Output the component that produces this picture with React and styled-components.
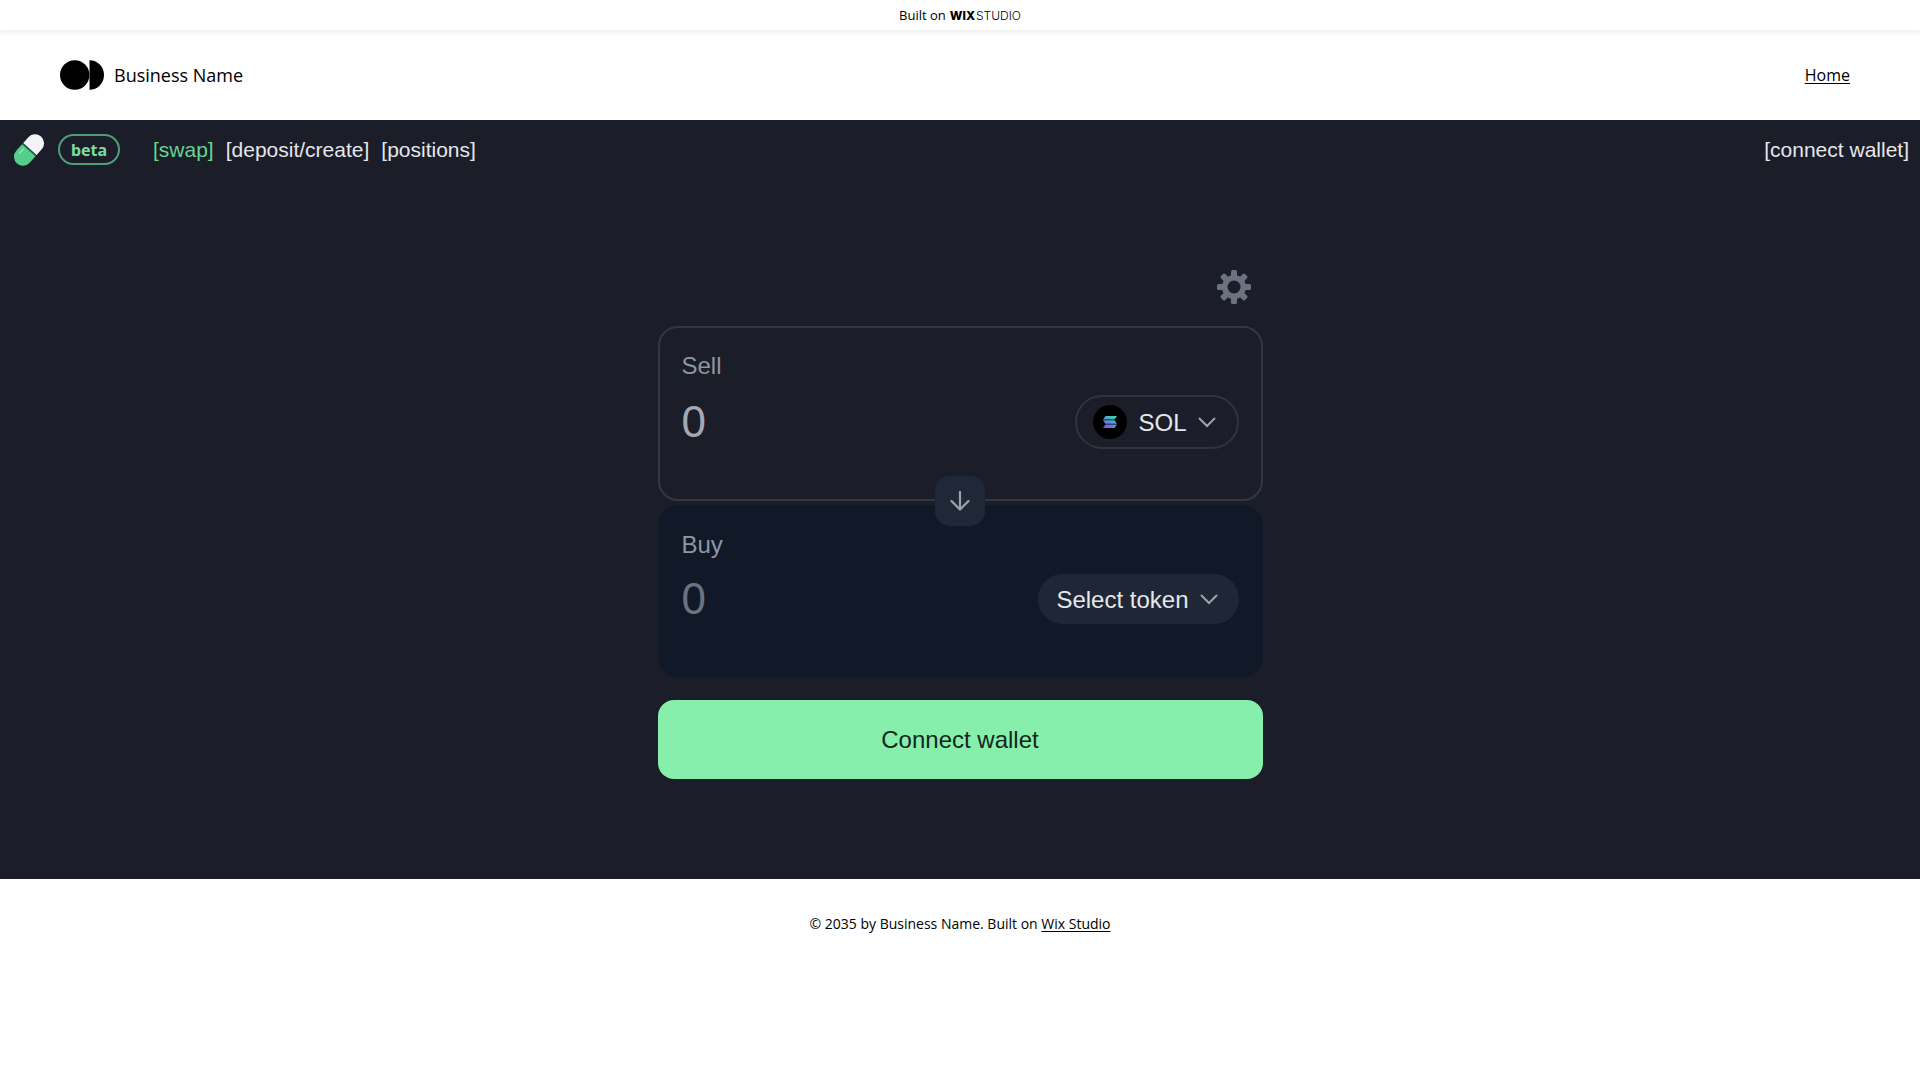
import React, { useState } from "react"
import styled, { createGlobalStyle } from "styled-components"

const GlobalStyle = createGlobalStyle`
  * {
    box-sizing: border-box;
  }

  body {
    margin: 0;
    background: #fff;
    color: #000;
    font-family: "Open Sans", "Noto Sans", sans-serif;
  }

  button,
  input,
  select {
    font-family: inherit;
  }
`

const Banner = styled.a`
  position: relative;
  display: flex;
  justify-content: center;
  align-items: center;
  gap: 4px;
  height: 30px;
  background: #fff;
  box-shadow: 0 0 8px rgba(0, 0, 0, 0.12);
  color: #000;
  font-size: 13px;
  text-decoration: none;
`

const WixMark = styled.span`
  display: flex;
  gap: 1px;
  font-family: Inter, sans-serif;
  font-size: 12px;
  font-weight: 300;
`

const WixBold = styled.span`
  font-weight: 800;
`

const Header = styled.header`
  display: flex;
  justify-content: space-between;
  align-items: center;
  height: 90px;
  padding: 0 70px 0 60px;
`

const Brand = styled.div`
  display: flex;
  align-items: center;
  gap: 10px;
  font-size: 18px;
`

const HomeLink = styled.a`
  color: #000;
  font-size: 16px;
  text-underline-offset: 2px;
`

const Dapp = styled.main`
  min-height: 759px;
  padding-bottom: 100px;
  background: #1b1d28;
  font-family: "Liberation Sans", Arial, sans-serif;
`

const TopBar = styled.div`
  display: flex;
  align-items: center;
  height: 59px;
  padding: 0 11px;
`

const Beta = styled.span`
  display: flex;
  justify-content: center;
  align-items: center;
  width: 62px;
  height: 31px;
  margin-left: 11px;
  border: 2px solid #4f9f75;
  border-radius: 16px;
  color: #79dda0;
  font-family: "Noto Sans", sans-serif;
  font-size: 16px;
  font-weight: 700;
`

const Nav = styled.nav`
  display: flex;
  gap: 12px;
  margin: 0 auto 0 33px;
`

const NavLink = styled.a`
  color: ${({ $active }) => ($active ? "#68d391" : "#e5e7eb")};
  font-size: 21px;
  text-decoration: none;
`

const WalletLink = styled.button`
  padding: 0;
  border: 0;
  background: none;
  color: #e5e7eb;
  font-size: 21px;
  cursor: pointer;
`

const SwapForm = styled.form`
  display: flex;
  flex-direction: column;
  width: 100%;
  max-width: 605px;
  margin: 0 auto;
  padding-top: 91px;
`

const SettingsButton = styled.button`
  display: flex;
  align-self: flex-end;
  margin: 0 12px 22px 0;
  padding: 0;
  border: 0;
  background: none;
  color: #6b7280;
  cursor: pointer;
`

const Card = styled.section`
  height: ${({ $filled }) => ($filled ? 172 : 175)}px;
  padding: 24px 22px;
  border: 2px solid ${({ $filled }) => ($filled ? "#111827" : "#343640")};
  border-radius: 20px;
  background: ${({ $filled }) => ($filled ? "#111827" : "transparent")};
`

const CardLabel = styled.label`
  display: block;
  color: #9095a1;
  font-size: 24px;
  line-height: 28px;
`

const Row = styled.div`
  display: flex;
  justify-content: space-between;
  align-items: center;
  margin-top: 15px;
`

const Amount = styled.input`
  flex: 1;
  min-width: 0;
  height: 50px;
  padding: 0;
  border: 0;
  outline: 0;
  background: none;
  color: #a3a8b4;
  font-size: 44px;

  &::placeholder {
    color: #6b7280;
  }
`

const TokenPill = styled.div`
  display: flex;
  align-items: center;
  gap: 11px;
  height: ${({ $filled }) => ($filled ? 50 : 54)}px;
  padding: 0 ${({ $filled }) => ($filled ? 19 : 21)}px 0 16px;
  border: 2px solid ${({ $filled }) => ($filled ? "#1f2737" : "#31333d")};
  border-radius: 27px;
  background: ${({ $filled }) => ($filled ? "#1f2737" : "transparent")};
`

const TokenSelect = styled.select`
  appearance: none;
  field-sizing: content;
  padding: 0;
  border: 0;
  outline: 0;
  background: none;
  color: #e5e7eb;
  font-size: 24px;
  cursor: pointer;

  option {
    background: #1f2937;
  }
`

const Divider = styled.div`
  position: relative;
  height: 4px;
`

const FlipButton = styled.button`
  position: absolute;
  top: 0;
  left: 50%;
  display: flex;
  justify-content: center;
  align-items: center;
  width: 50px;
  height: 50px;
  padding: 0;
  border: 0;
  border-radius: 15px;
  background: #202736;
  transform: translate(-50%, -50%);
  cursor: pointer;
`

const SubmitButton = styled.button`
  height: 79px;
  margin-top: 23px;
  border: 0;
  border-radius: 16px;
  background: #86efac;
  color: #14261d;
  font-size: 24px;
  cursor: pointer;
`

const Footer = styled.footer`
  padding: 34px 20px;
  font-size: 14px;
  line-height: 22px;
  text-align: center;

  a {
    color: #000;
    text-underline-offset: 2px;
  }
`

const LogoIcon = () => (
  <svg width="44" height="30" viewBox="0 0 44 30" aria-hidden="true">
    <circle cx="14.7" cy="15" r="14.7" />
    <path d="M29.5 0.3a14.5 14.7 0 0 1 0 29.4z" />
  </svg>
)

const PillIcon = () => (
  <svg width="36" height="36" viewBox="0 0 34 34" aria-hidden="true">
    <g transform="rotate(42 17 17)">
      <path d="M8.500 16V8.500a8.500 8.500 0 0 1 17 0V16z" fill="#f3f4f6" />
      <path d="M8.500 17v8.500a8.500 8.500 0 0 0 17 0V17z" fill="#56cd8c" />
      <path d="M8.500 16.500h17" stroke="#23563f" strokeWidth="1.4" />
      <path d="M12.500 20v5" stroke="#8be5b3" strokeWidth="1.6" strokeLinecap="round" />
    </g>
  </svg>
)

const GearIcon = () => (
  <svg width="34" height="34" viewBox="0 0 34 34" fill="currentColor" aria-hidden="true">
    {[0, 45, 90, 135].map(angle => (
      <rect
        key={angle}
        x="14"
        y="0"
        width="6"
        height="34"
        rx="1.5"
        transform={`rotate(${angle} 17 17)`}
      />
    ))}
    <circle cx="17" cy="17" r="12" />
    <circle cx="17" cy="17" r="6.5" fill="#1b1d28" />
  </svg>
)

const SolIcon = () => (
  <svg width="34" height="34" viewBox="0 0 34 34" aria-hidden="true">
    <defs>
      <linearGradient id="sol" x1="0.8" y1="0" x2="0.2" y2="1">
        <stop offset="0" stopColor="#35d6a4" />
        <stop offset="0.5" stopColor="#5596d8" />
        <stop offset="1" stopColor="#8a4fe0" />
      </linearGradient>
    </defs>
    <circle cx="17" cy="17" r="17" />
    <path
      d="M12.5 11H24l-2.5 3.5H10zM10 15.3h11.5l2.5 3.4H12.5zM12.5 19.5H24L21.5 23H10z"
      fill="url(#sol)"
    />
  </svg>
)

const ChevronIcon = () => (
  <svg width="18" height="12" viewBox="0 0 18 12" fill="none" aria-hidden="true">
    <path d="M1.5 2.5L9 10l7.5-7.5" stroke="#9ca3af" strokeWidth="2" strokeLinecap="round" />
  </svg>
)

const ArrowIcon = () => (
  <svg width="20" height="20" viewBox="0 0 20 20" fill="none" aria-hidden="true">
    <path
      d="M10 1v17M1.5 10l8.5 8.5 8.5-8.5"
      stroke="#9ca3af"
      strokeWidth="2.2"
      strokeLinecap="round"
      strokeLinejoin="round"
    />
  </svg>
)

const App = () => {
  const [sell, setSell] = useState("0")

  return (
    <>
      <GlobalStyle />
      <Banner href="#studio">
        <span>Built on</span>
        <WixMark>
          <WixBold>WIX</WixBold>
          <span>STUDIO</span>
        </WixMark>
      </Banner>
      <Header>
        <Brand>
          <LogoIcon />
          <span>Business Name</span>
        </Brand>
        <HomeLink href="#home">Home</HomeLink>
      </Header>
      <Dapp>
        <TopBar>
          <PillIcon />
          <Beta>beta</Beta>
          <Nav>
            <NavLink href="#swap" $active>
              [swap]
            </NavLink>
            <NavLink href="#deposit">[deposit/create]</NavLink>
            <NavLink href="#positions">[positions]</NavLink>
          </Nav>
          <WalletLink type="button">[connect wallet]</WalletLink>
        </TopBar>
        <SwapForm onSubmit={e => e.preventDefault()}>
          <SettingsButton type="button" aria-label="Settings">
            <GearIcon />
          </SettingsButton>
          <Card>
            <CardLabel htmlFor="sell">Sell</CardLabel>
            <Row>
              <Amount
                id="sell"
                inputMode="decimal"
                value={sell}
                onChange={e => setSell(e.target.value)}
              />
              <TokenPill>
                <SolIcon />
                <TokenSelect aria-label="Token to sell">
                  <option>SOL</option>
                </TokenSelect>
                <ChevronIcon />
              </TokenPill>
            </Row>
          </Card>
          <Divider>
            <FlipButton type="button" aria-label="Switch tokens">
              <ArrowIcon />
            </FlipButton>
          </Divider>
          <Card $filled>
            <CardLabel htmlFor="buy">Buy</CardLabel>
            <Row>
              <Amount id="buy" inputMode="decimal" placeholder="0" />
              <TokenPill $filled>
                <TokenSelect aria-label="Token to buy">
                  <option>Select token</option>
                </TokenSelect>
                <ChevronIcon />
              </TokenPill>
            </Row>
          </Card>
          <SubmitButton type="submit">Connect wallet</SubmitButton>
        </SwapForm>
      </Dapp>
      <Footer>
        © 2035 by Business Name. Built on <a href="#wix">Wix Studio</a>
      </Footer>
    </>
  )
}

export default App
